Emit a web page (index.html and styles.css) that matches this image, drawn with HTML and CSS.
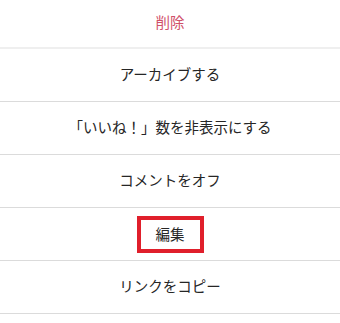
FILE: index.html
```html
<!DOCTYPE html>
<html lang="ja">
<head>
<meta charset="utf-8">
<link rel="stylesheet" href="styles.css">
</head>
<body>
<ul class="menu">
  <li class="item item-first"><span class="danger">削除</span></li>
  <li class="item"><span>アーカイブする</span></li>
  <li class="item"><span>「いいね！」数を非表示にする</span></li>
  <li class="item"><span>コメントをオフ</span></li>
  <li class="item"><span class="highlight">編集</span></li>
  <li class="item"><span>リンクをコピー</span></li>
</ul>
</body>
</html>
```
FILE: styles.css
```css
html, body {
  margin: 0;
  padding: 0;
  background: #ffffff;
}
body {
  font-family: "Noto Sans CJK JP", "Noto Sans", sans-serif;
  font-size: 14.5px;
  line-height: 1.2;
  color: #262626;
}
.menu {
  list-style: none;
  margin: 0;
  padding: 0;
}
.item {
  box-sizing: border-box;
  height: 53px;
  padding-bottom: 2px;
  display: flex;
  align-items: center;
  justify-content: center;
  border-bottom: 1px solid #dbdbdb;
}
.item-first {
  height: 49px;
  padding-bottom: 3px;
  border-bottom: 2px solid #efefef;
}
.danger {
  color: #d0506a;
}
.highlight {
  box-sizing: border-box;
  width: 67px;
  height: 37px;
  margin-top: 2px;
  border: 4px solid #e01f2b;
  display: flex;
  align-items: center;
  justify-content: center;
}
```
